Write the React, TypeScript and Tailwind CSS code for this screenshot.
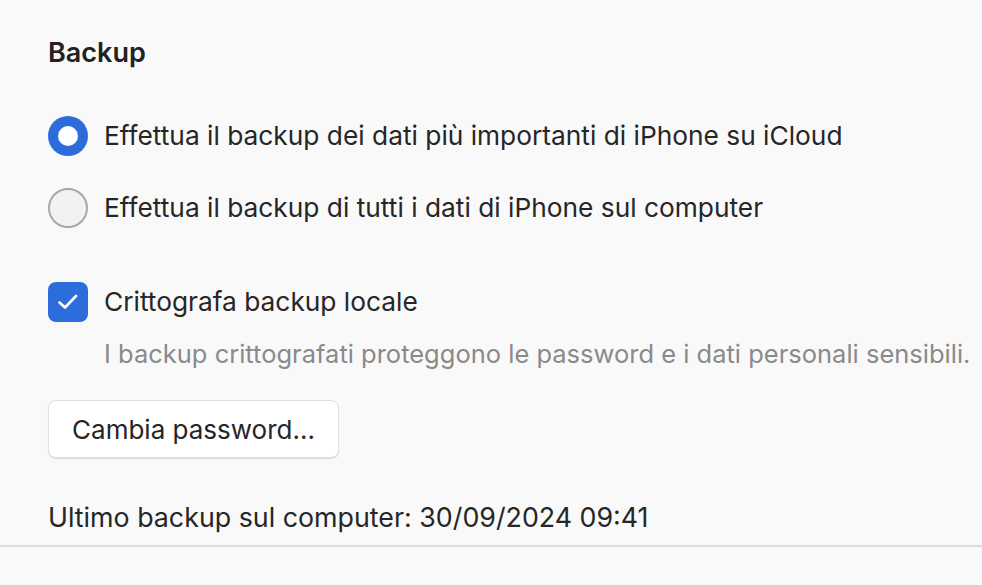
import React from "react";

export default function App() {
  return (
    <div
      className="w-[982px] h-[585px] bg-[#f9f9f9] text-[#262626] relative overflow-hidden"
      style={{ fontFamily: "Inter, 'Noto Sans', sans-serif" }}
    >
      <div className="pl-[48px] pt-[38px]">
        <h2 className="text-[27px] leading-[30px] font-semibold text-[#222]">Backup</h2>

        <div className="mt-[48px] h-[40px] flex items-center gap-[16px]">
          <div className="w-[40px] h-[40px] shrink-0 rounded-full bg-[#2c6ddb] flex items-center justify-center">
            <div className="w-[20px] h-[20px] rounded-full bg-white" />
          </div>
          <span className="text-[26.3px] leading-[32px] whitespace-nowrap">
            Effettua il backup dei dati più importanti di iPhone su iCloud
          </span>
        </div>

        <div className="mt-[32px] h-[40px] flex items-center gap-[16px]">
          <div className="w-[40px] h-[40px] shrink-0 rounded-full bg-[#f2f2f2] border-2 border-[#a8a8a8]" />
          <span className="text-[26.3px] leading-[32px] whitespace-nowrap">
            Effettua il backup di tutti i dati di iPhone sul computer
          </span>
        </div>

        <div className="mt-[54px] h-[40px] flex items-center gap-[16px]">
          <div className="w-[40px] h-[40px] shrink-0 rounded-[8px] bg-[#2c6ddb] flex items-center justify-center">
            <svg width="26" height="26" viewBox="0 0 26 26" fill="none">
              <path d="M4.5 13.5 L10 18.5 L21 7" stroke="white" strokeWidth="2.6" strokeLinecap="round" strokeLinejoin="round" />
            </svg>
          </div>
          <span className="text-[26.3px] leading-[32px] whitespace-nowrap">Crittografa backup locale</span>
        </div>

        <p className="ml-[56px] mt-[16px] text-[25.5px] leading-[32px] text-[#8a8a8a] whitespace-nowrap">
          I backup crittografati proteggono le password e i dati personali sensibili.
        </p>

        <button className="mt-[30px] block w-[291px] h-[58px] rounded-[8px] bg-white border border-[#e0e0e0] shadow-[0_1px_1px_rgba(0,0,0,0.12)] text-[26px] text-[#262626]">
          Cambia password...
        </button>

        <p className="mt-[44px] text-[26.8px] leading-[30px] whitespace-nowrap">
          Ultimo backup sul computer: 30/09/2024 09:41
        </p>
      </div>
      <div className="absolute left-0 right-0 top-[545px] h-[2px] bg-[#dcdcdc]" />
    </div>
  );
}
